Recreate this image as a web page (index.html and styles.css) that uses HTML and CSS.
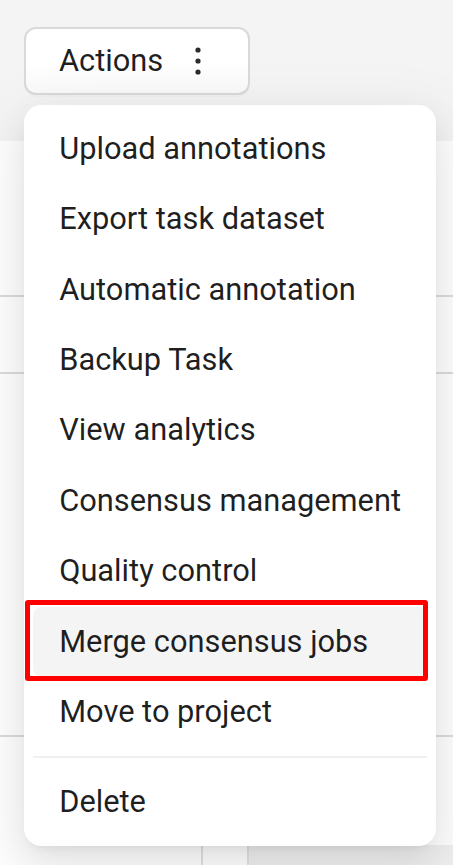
FILE: index.html
```html
<!DOCTYPE html>
<html lang="en">
<head>
<meta charset="utf-8">
<title>Actions menu</title>
<link rel="stylesheet" href="styles.css">
</head>
<body>
<div class="page">
  <div class="toolbar">
    <button class="actions-btn" type="button">
      <span class="actions-label">Actions</span>
      <svg class="dots" width="6" height="28" viewBox="0 0 6 28" aria-hidden="true">
        <circle cx="3" cy="3" r="2.6"/>
        <circle cx="3" cy="14" r="2.6"/>
        <circle cx="3" cy="25" r="2.6"/>
      </svg>
    </button>
  </div>
  <div class="panel">
    <div class="row row-1"></div>
    <div class="row row-2"></div>
    <div class="row row-3"></div>
    <div class="row row-4"></div>
    <div class="row-cells">
      <div class="cell cell-a"></div>
      <div class="cell cell-b"></div>
      <div class="cell cell-c"></div>
    </div>
  </div>

  <ul class="menu">
    <li class="item">Upload annotations</li>
    <li class="item">Export task dataset</li>
    <li class="item">Automatic annotation</li>
    <li class="item">Backup Task</li>
    <li class="item">View analytics</li>
    <li class="item">Consensus management</li>
    <li class="item">Quality control</li>
    <li class="item item-active">Merge consensus jobs</li>
    <li class="item">Move to project</li>
    <li class="divider" role="separator"></li>
    <li class="item">Delete</li>
    <li class="highlight-box" aria-hidden="true"></li>
  </ul>
</div>
</body>
</html>
```

FILE: styles.css
```css
* { box-sizing: border-box; }

html, body {
  margin: 0;
  padding: 0;
}

body {
  background: #f4f4f4;
  font-family: Roboto, "Liberation Sans", Arial, sans-serif;
  color: rgba(0, 0, 0, 0.88);
  overflow: hidden;
}

.page {
  position: relative;
  width: 453px;
  height: 865px;
  overflow: hidden;
}

.toolbar {
  padding: 27px 0 0 24px;
  height: 95px;
}

.actions-btn {
  display: flex;
  align-items: center;
  width: 226px;
  height: 68px;
  padding: 0 0 0 33px;
  border: 2px solid #d9d9d9;
  border-radius: 12px;
  background: linear-gradient(#ffffff 55%, #f9f9f9);
  box-shadow: 0 2px 0 rgba(0, 0, 0, 0.02);
  font-family: inherit;
  font-size: 30.8px;
  color: rgba(0, 0, 0, 0.88);
  cursor: pointer;
}

.actions-label {
  line-height: 1;
}

.dots {
  margin-left: 32px;
  fill: #2b2b2b;
}

.panel {
  margin-top: 46px;
  background: #ffffff;
}

.row {
  border-bottom: 2px solid #dcdcdc;
}
.row-1 { height: 156px; }
.row-2 { height: 77px; }
.row-3 { height: 363px; }
.row-4 { height: 108px; border-bottom: none; }

.row-cells {
  display: grid;
  grid-template-columns: 203px 46px 1fr;
  height: 40px;
}
.cell-a { border-right: 2px solid #e2e2e2; }
.cell-b { border-right: 2px solid #e2e2e2; }
.cell-c { background: #f0f0f0; }

.menu {
  position: absolute;
  left: 24px;
  top: 105px;
  width: 412px;
  margin: 0;
  padding: 8.8px;
  list-style: none;
  background: #ffffff;
  border-radius: 17.6px;
  box-shadow:
    0 13px 35px 0 rgba(0, 0, 0, 0.08),
    0 7px 13px -9px rgba(0, 0, 0, 0.12),
    0 20px 62px 18px rgba(0, 0, 0, 0.05);
}

.item {
  height: 70.4px;
  padding: 0 26.4px;
  font-size: 30.8px;
  line-height: 70.4px;
  white-space: nowrap;
  border-radius: 8.8px;
  color: rgba(0, 0, 0, 0.88);
}

.item-active {
  background: rgba(0, 0, 0, 0.045);
}

.divider {
  height: 2.2px;
  margin: 8.8px 0;
  background: #f0f0f0;
}

.highlight-box {
  position: absolute;
  left: 1px;
  top: 495px;
  width: 403px;
  height: 81px;
  border: 5.5px solid #ff0000;
  border-radius: 3px;
}
```
